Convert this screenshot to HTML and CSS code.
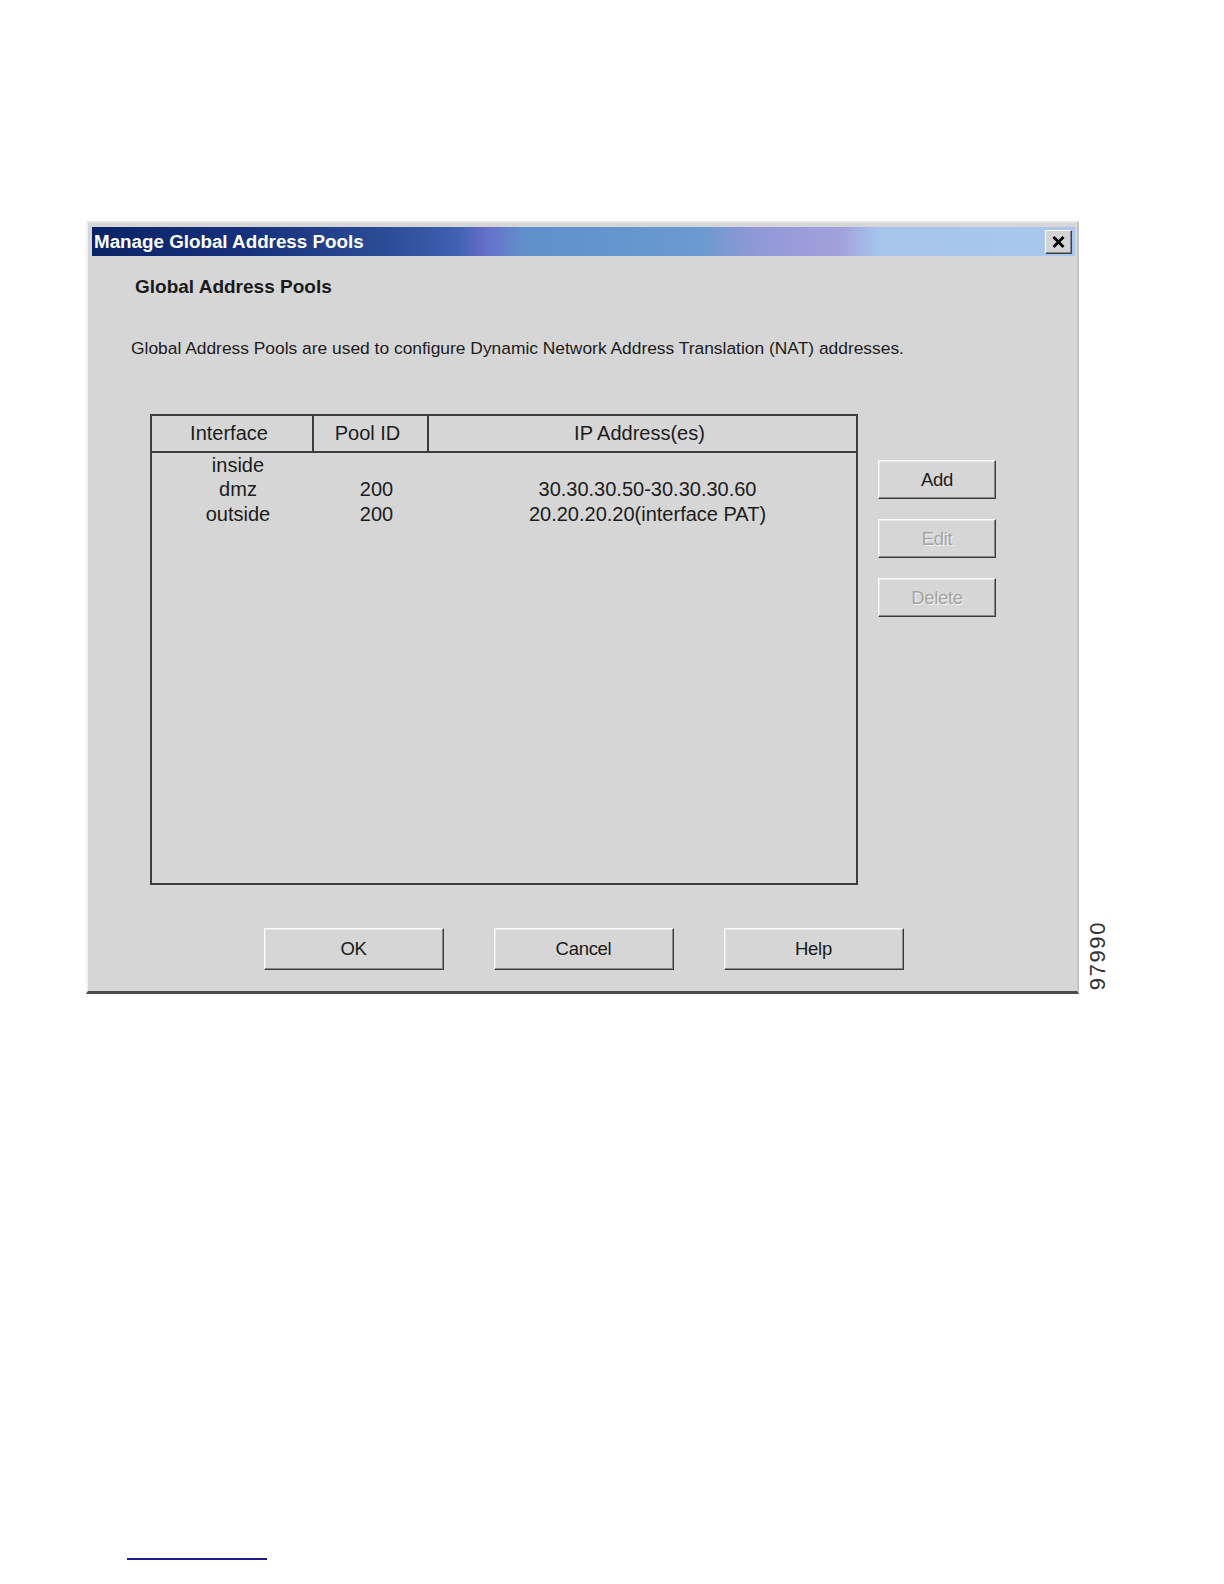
FILE: index.html
```html
<!DOCTYPE html>
<html lang="en">
<head>
  <meta charset="UTF-8">
  <title>Manage Global Address Pools</title>
  <link rel="stylesheet" href="styles.css">
</head>
<body>

  <!-- dialog figure -->
  <div class="figure">
    <div class="window">
      <div class="title-bar">
        <span class="title-text">Manage Global Address Pools</span>
        <span class="close-btn">
          <svg width="13" height="12" viewBox="0 0 13 12">
            <path d="M1.5 1 L11.5 11 M11.5 1 L1.5 11" stroke="#000" stroke-width="2.8" fill="none"/>
          </svg>
        </span>
      </div>

      <div class="content">
        <h3 class="section-title">Global Address Pools</h3>
        <p class="desc">Global Address Pools are used to configure Dynamic Network Address Translation (NAT) addresses.</p>

        <div class="pool-area">
          <div class="pool-table">
            <div class="pool-head">
              <div class="th">Interface</div>
              <div class="th">Pool ID</div>
              <div class="th last">IP Address(es)</div>
            </div>
            <div class="pool-row">
              <div class="td">inside</div>
              <div class="td"></div>
              <div class="td"></div>
            </div>
            <div class="pool-row">
              <div class="td">dmz</div>
              <div class="td">200</div>
              <div class="td">30.30.30.50-30.30.30.60</div>
            </div>
            <div class="pool-row">
              <div class="td">outside</div>
              <div class="td">200</div>
              <div class="td">20.20.20.20(interface PAT)</div>
            </div>
          </div>

          <div class="side-btns">
            <button class="btn side">Add</button>
            <button class="btn side disabled">Edit</button>
            <button class="btn side disabled">Delete</button>
          </div>
        </div>

        <div class="bottom-btns">
          <button class="btn wide">OK</button>
          <button class="btn wide">Cancel</button>
          <button class="btn wide">Help</button>
        </div>
      </div>
    </div>

    <span class="fig-num">97990</span>
  </div>

  <div class="foot-rule"></div>

</body>
</html>
```

FILE: styles.css
```css
body {
  margin: 0;
  padding: 0;
  background: #fff;
  font-family: "Liberation Sans", Arial, sans-serif;
  color: #1c1c1c;
}

.figure {
  position: relative;
  width: 993px;
  margin: 221px 0 0 86px;
}

/* === dialog window === */
.window {
  box-sizing: border-box;
  width: 993px;
  background: #d6d6d6;
  border-left: 2px solid #f2f2f2;
  border-top: 2px solid #e6e6e6;
  border-right: 2px solid #c4c4c4;
  border-bottom: 3px solid #4c4c4c;
  padding: 4px 2px 0 4px;
}

.title-bar {
  height: 29px;
  display: flex;
  align-items: center;
  justify-content: space-between;
  background: linear-gradient(to right,
    #0a2366 0%,
    #16327c 16%,
    #2c4c98 30%,
    #4060b0 37%,
    #6670c8 40%,
    #6090cc 44%,
    #6a9ad0 62%,
    #8f98d6 67%,
    #a3a0dc 76%,
    #a6c4ec 80%,
    #a8c8f0 100%);
}

.title-text {
  color: #fff;
  font-weight: bold;
  font-size: 18.8px;
  padding-left: 2px;
}

.close-btn {
  width: 27px;
  height: 24px;
  margin-right: 3px;
  box-sizing: border-box;
  background: #d4d4d4;
  border: 1px solid;
  border-color: #fff #404040 #404040 #fff;
  box-shadow: inset -1px -1px #888;
  display: flex;
  align-items: center;
  justify-content: center;
}

.content {
  padding: 20px 0 21px 39px;
}

.section-title {
  margin: 0 0 0 4px;
  font-size: 19px;
  line-height: 22px;
  font-weight: bold;
  color: #1a1a1a;
}

.desc {
  margin: 40px 0 0 0;
  font-size: 17.4px;
  line-height: 20px;
}

/* === pool table === */
.pool-area {
  display: flex;
  align-items: flex-start;
  gap: 20px;
  margin: 56px 0 0 19px;
}

.pool-table {
  box-sizing: border-box;
  width: 708px;
  height: 471px;
  border: 2px solid #3c3c3c;
  font-size: 20px;
}

.pool-head,
.pool-row {
  display: grid;
  grid-template-columns: 162px 115px 1fr;
}

.pool-head {
  height: 35px;
  border-bottom: 2px solid #3c3c3c;
}

.th {
  display: flex;
  align-items: center;
  justify-content: center;
  border-right: 2px solid #3c3c3c;
  padding-right: 6px;
}

.th.last {
  border-right: none;
}

.pool-row {
  height: 24.5px;
}

.td {
  display: flex;
  align-items: center;
  justify-content: center;
  padding-left: 10px;
}

.side-btns {
  display: flex;
  flex-direction: column;
  gap: 20px;
  margin-top: 46px;
}

/* === buttons === */
.btn {
  box-sizing: border-box;
  font-family: "Liberation Sans", Arial, sans-serif;
  font-size: 18.5px;
  color: #1a1a1a;
  background: #d6d6d6;
  border: 1px solid;
  border-color: #fafafa #3a3a3a #3a3a3a #fafafa;
  box-shadow: inset -1px -1px #8a8a8a, inset 1px 1px #e8e8e8;
  padding: 0;
  letter-spacing: -0.3px;
}

.btn.side {
  width: 118px;
  height: 39px;
}

.btn.disabled {
  color: #a4a4a4;
  text-shadow: 1px 1px #f4f4f4;
}

.btn.wide {
  width: 180px;
  height: 42px;
}

.bottom-btns {
  display: flex;
  justify-content: center;
  gap: 50px;
  margin: 43px 0 0 -39px;
}

/* === figure number === */
.fig-num {
  position: absolute;
  left: 999px;
  top: 700px;
  writing-mode: vertical-rl;
  transform: rotate(180deg);
  font-size: 22px;
  letter-spacing: 1.6px;
  color: #333;
}

.foot-rule {
  width: 140px;
  height: 2px;
  background: #1c1c8c;
  margin: 564px 0 0 127px;
}
```
